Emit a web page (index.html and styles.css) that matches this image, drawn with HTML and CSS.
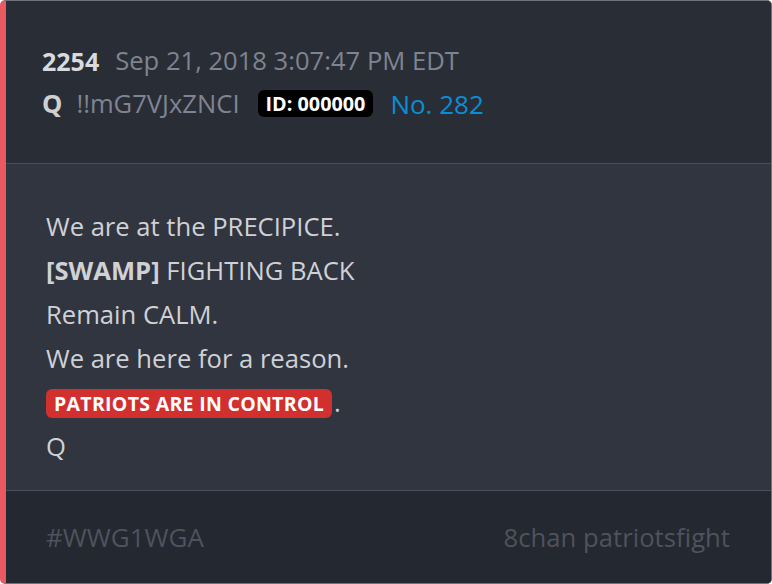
FILE: index.html
```html
<!DOCTYPE html>
<html>
<head>
<meta charset="utf-8">
<link rel="stylesheet" href="styles.css">
</head>
<body>
<div class="card">
  <div class="header">
    <div class="row"><span class="num">2254</span><span class="date">Sep 21, 2018 3:07:47 PM EDT</span></div>
    <div class="row"><span class="name">Q</span><span class="trip">!!mG7VJxZNCI</span><span class="id">ID: 000000</span><span class="no">No. 282</span></div>
  </div>
  <div class="body">
    <div class="line">We are at the PRECIPICE.</div>
    <div class="line"><b>[SWAMP]</b> FIGHTING BACK</div>
    <div class="line">Remain CALM.</div>
    <div class="line">We are here for a reason.</div>
    <div class="line"><span class="hl">PATRIOTS ARE IN CONTROL</span>.</div>
    <div class="line">Q</div>
  </div>
  <div class="footer">
    <span>#WWG1WGA</span>
    <span>8chan patriotsfight</span>
  </div>
</div>
</body>
</html>
```
FILE: styles.css
```css
* { box-sizing: border-box; }
html, body { margin: 0; padding: 0; background: #ffffff; }
body { font-family: "Open Sans", "Noto Sans", sans-serif; }
.card {
  width: 772px;
  height: 584px;
  border: 1px solid #6e737c;
  border-left: 6px solid #e85a5f;
  border-radius: 5px;
  overflow: hidden;
  display: flex;
  flex-direction: column;
  background: #242830;
}
.header {
  background: #292d36;
  padding: 38px 0 38px 36px;
  border-bottom: 1px solid #4a4f59;
  height: 163px;
}
.row {
  display: flex;
  align-items: center;
  height: 43px;
  font-size: 25.6px;
  white-space: nowrap;
}
.num { font-weight: 700; color: #d9dadd; margin-right: 16px; font-size: 25px; }
.date { color: #7f8491; }
.name { font-weight: 700; color: #cfd0d4; margin-right: 14px; }
.trip { color: #7f8491; margin-right: 18px; }
.id {
  background: #000;
  color: #fff;
  font-weight: 700;
  font-size: 19.8px;
  border-radius: 6px;
  padding: 0 8px;
  height: 27px;
  line-height: 27px;
  margin-right: 17px;
}
.no { color: #0b8dd6; font-size: 26px; }
.body {
  background: #303540;
  padding: 41px 40px 20px;
  border-bottom: 1px solid #4a4f59;
  height: 327px;
}
.line {
  font-size: 25.6px;
  line-height: 44px;
  height: 44px;
  color: #d0d1d5;
  display: flex;
  align-items: center;
  white-space: pre;
}
.line b { font-weight: 700; }
.hl {
  background: #d2302f;
  color: #fff;
  font-weight: 700;
  font-size: 19.5px;
  border-radius: 6px;
  padding: 0 8px;
  height: 29px;
  line-height: 29px;
  letter-spacing: 0.3px;
  margin-right: 2px;
}
.footer {
  flex: 1;
  background: #242830;
  display: flex;
  justify-content: space-between;
  align-items: center;
  padding: 0 41px 0 40px;
  font-size: 26px;
  color: #4e535d;
}
.footer span + span { font-size: 25.7px; }
```
